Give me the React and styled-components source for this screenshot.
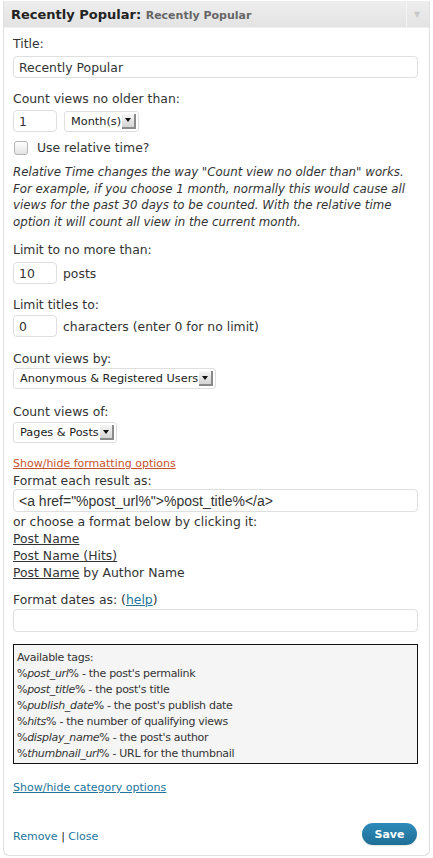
import React from 'react';
import styled, { createGlobalStyle } from 'styled-components';

const Global = createGlobalStyle`
  html, body { margin: 0; padding: 0; background: #fff; }
  body { font-family: "DejaVu Sans", "Liberation Sans", sans-serif; color: #333; }
`;

const Panel = styled.div`
  margin: 0 3px 0 3px;
  width: 425px;
  border: 1px solid #dfdfdf;
  border-top: none;
  border-radius: 0 0 6px 6px;
  background: #fff;
`;

const Header = styled.div`
  display: flex;
  align-items: center;
  height: 26px;
  margin-top: 1px;
  background: linear-gradient(#eeeeee, #e3e3e3);
  border-bottom: 1px solid #f0f0f0;
`;

const HeaderTitle = styled.div`
  flex: 1;
  padding-left: 7px;
  font-size: 13px;
  font-weight: bold;
  color: #222;
  white-space: nowrap;
`;

const HeaderSub = styled.span`
  font-size: 11px;
  color: #666;
`;

const HeaderToggle = styled.div`
  width: 20px;
  height: 26px;
  border-left: 1px solid #f4f4f4;
  display: flex;
  align-items: center;
  justify-content: center;
  color: #c8c8c8;
  font-size: 8px;
  margin-right: 2px;
`;

const Body = styled.div`
  padding: 8px 11px 10px 9px;
  font-size: 12.4px;
`;

const Label = styled.div`
  line-height: 16px;
  margin-top: ${(p) => p.top || 0}px;
  margin-bottom: ${(p) => p.gap ?? 3}px;
`;

const TextInput = styled.div`
  box-sizing: border-box;
  width: ${(p) => (p.small ? '44px' : '100%')};
  height: ${(p) => p.h || 22}px;
  border: 1px solid #dfdfdf;
  border-radius: 4px;
  background: #fff;
  padding: 0 5px;
  display: flex;
  align-items: center;
  font-size: ${(p) => (p.sans ? '14px' : '12.4px')};
  font-family: ${(p) => (p.sans ? '"Liberation Sans", Arial, sans-serif' : 'inherit')};
  color: #333;
  flex-shrink: 0;
`;

const Row = styled.div`
  display: flex;
  align-items: center;
  gap: ${(p) => p.gap || 6}px;
  margin-top: ${(p) => p.top || 0}px;
`;

const Select = styled.div`
  box-sizing: border-box;
  height: 21px;
  border: 1px solid #dfdfdf;
  border-radius: 3px;
  background: #fff;
  padding: 0 2px 0 6px;
  display: inline-flex;
  align-items: center;
  font-size: 11.3px;
  color: #222;
  gap: 1px;
`;

const Arrow = styled.span`
  width: 14px;
  height: 15px;
  box-sizing: border-box;
  background: linear-gradient(#f6f6f6, #d4d4d4);
  border-right: 2px solid #8a8a8a;
  border-bottom: 2px solid #8a8a8a;
  display: flex;
  align-items: center;
  justify-content: center;
  &::after {
    content: '';
    border-left: 3px solid transparent;
    border-right: 3px solid transparent;
    border-top: 4px solid #111;
  }
`;

const Checkbox = styled.span`
  width: 12px;
  height: 12px;
  border: 1px solid #b5b5b5;
  border-radius: 3px;
  background: linear-gradient(#fdfdfd, #e4e4e4);
  margin-left: 1px;
`;

const CheckLabel = styled.span`
  line-height: 16px;
`;

const Note = styled.div`
  font-style: italic;
  font-size: 11.8px;
  line-height: 16.6px;
  margin-top: 8px;
  color: #333;
`;

const SmallLink = styled.a`
  display: block;
  font-size: 11px;
  line-height: 16px;
  color: ${(p) => p.color || '#21759b'};
  text-decoration: underline;
  margin-top: ${(p) => p.top || 0}px;
`;

const Lines = styled.div`
  line-height: 17px;
  margin-top: 1px;
`;

const U = styled.span`
  text-decoration: underline;
  color: #333;
`;

const HelpLink = styled.span`
  color: #21759b;
  text-decoration: underline;
`;

const TagBox = styled.div`
  margin-top: 12px;
  border: 1px solid #111;
  background: #f5f5f5;
  padding: 5px 3px 1px;
  font-size: 11px;
  line-height: 16px;
  color: #333;
  letter-spacing: -0.3px;
`;

const Footer = styled.div`
  display: flex;
  align-items: center;
  justify-content: space-between;
  margin-top: 27px;
`;

const FooterLinks = styled.div`
  font-size: 11px;
  color: #222;
  margin-top: 4px;
`;

const FooterLink = styled.span`
  color: #21759b;
`;

const SaveButton = styled.div`
  width: 55px;
  height: 22px;
  border-radius: 11px;
  background: linear-gradient(#2e8bba, #1e6f96);
  color: #fff;
  font-weight: bold;
  font-size: 11px;
  display: flex;
  align-items: center;
  justify-content: center;
  margin-right: 1px;
  box-shadow: 0 1px 1px rgba(0, 0, 0, 0.1);
`;

const tags = [
  ['post_url', " - the post's permalink"],
  ['post_title', " - the post's title"],
  ['publish_date', " - the post's publish date"],
  ['hits', ' - the number of qualifying views'],
  ['display_name', " - the post's author"],
  ['thumbnail_url', ' - URL for the thumbnail'],
];

export default function App() {
  return (
    <>
      <Global />
      <Panel>
        <Header>
          <HeaderTitle>
            Recently Popular: <HeaderSub>Recently Popular</HeaderSub>
          </HeaderTitle>
          <HeaderToggle>▼</HeaderToggle>
        </Header>
        <Body>
          <Label gap={4}>Title:</Label>
          <TextInput>Recently Popular</TextInput>

          <Label top={13}>Count views no older than:</Label>
          <Row gap={7}>
            <TextInput small>1</TextInput>
            <Select>Month(s) <Arrow /></Select>
          </Row>

          <Row gap={9} top={8}>
            <Checkbox />
            <CheckLabel>Use relative time?</CheckLabel>
          </Row>
          <Note>
            Relative Time changes the way "Count view no older than" works.
            For example, if you choose 1 month, normally this would cause all
            views for the past 30 days to be counted. With the relative time
            option it will count all view in the current month.
          </Note>

          <Label top={12} gap={4}>Limit to no more than:</Label>
          <Row gap={6}>
            <TextInput small>10</TextInput>
            <span>posts</span>
          </Row>

          <Label top={13} gap={2}>Limit titles to:</Label>
          <Row gap={6}>
            <TextInput small>0</TextInput>
            <span>characters (enter 0 for no limit)</span>
          </Row>

          <Label top={14} gap={1}>Count views by:</Label>
          <Select>Anonymous &amp; Registered Users <Arrow /></Select>

          <Label top={15} gap={2}>Count views of:</Label>
          <Select>Pages &amp; Posts <Arrow /></Select>

          <SmallLink color="#c7532e" top={13}>Show/hide formatting options</SmallLink>
          <Label top={1} gap={0}>Format each result as:</Label>
          <TextInput h={23} sans>
            &lt;a href="%post_url%"&gt;%post_title%&lt;/a&gt;
          </TextInput>
          <Lines>
            <div>or choose a format below by clicking it:</div>
            <div><U>Post Name</U></div>
            <div><U>Post Name (Hits)</U></div>
            <div><U>Post Name</U> by Author Name</div>
          </Lines>

          <Label top={11} gap={1}>
            Format dates as: (<HelpLink>help</HelpLink>)
          </Label>
          <TextInput h={23} />

          <TagBox>
            <div>Available tags:</div>
            {tags.map(([n, d]) => (
              <div key={n}>
                %<i>{n}</i>%{d}
              </div>
            ))}
          </TagBox>

          <SmallLink top={16}>Show/hide category options</SmallLink>

          <Footer>
            <FooterLinks>
              <FooterLink>Remove</FooterLink> | <FooterLink>Close</FooterLink>
            </FooterLinks>
            <SaveButton>Save</SaveButton>
          </Footer>
        </Body>
      </Panel>
    </>
  );
}
